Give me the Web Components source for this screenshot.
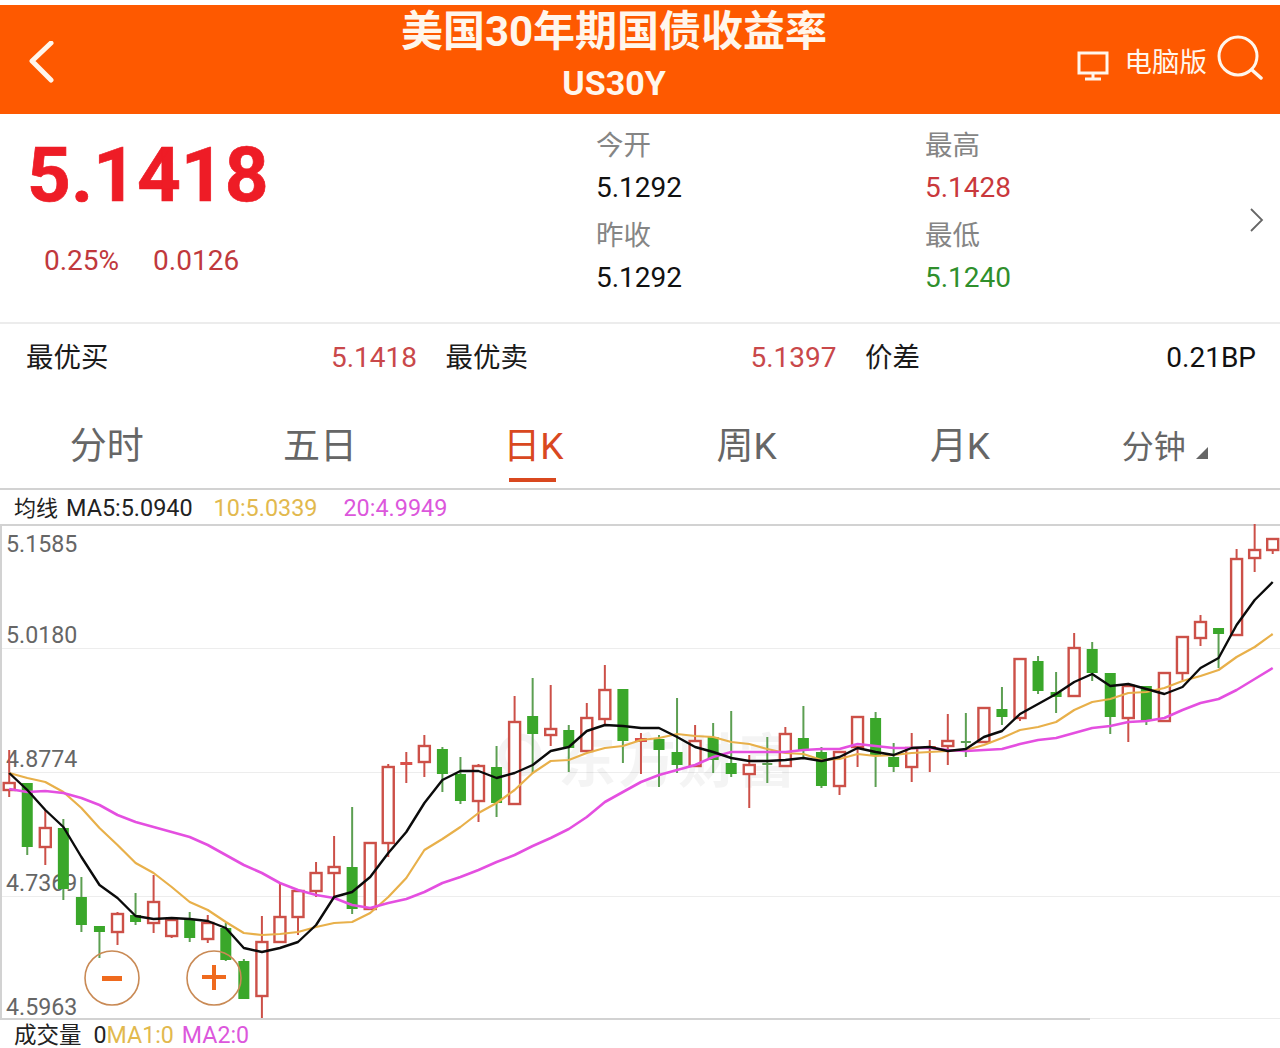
<!DOCTYPE html>
<html lang="zh">
<head>
<meta charset="utf-8">
<title>US30Y</title>
<style>
  html, body { margin: 0; padding: 0; background: #fff; }
  body { width: 1280px; height: 1048px; overflow: hidden; font-family: Roboto, "Noto Sans CJK SC", sans-serif; }
</style>
</head>
<body>
<quote-header>
  <span slot="title">美国30年期国债收益率</span>
  <span slot="code">US30Y</span>
</quote-header>
<quote-summary price="5.1418" percent="0.25%" change="0.0126">
  <quote-stat tone="#111" label="今开">5.1292</quote-stat>
  <quote-stat tone="#c9383c" label="最高">5.1428</quote-stat>
  <quote-stat tone="#111" label="昨收">5.1292</quote-stat>
  <quote-stat tone="#2f8f2c" label="最低">5.1240</quote-stat>
</quote-summary>
<quote-depth>
  <depth-cell label="最优买" tone="#c9484a">5.1418</depth-cell>
  <depth-cell label="最优卖" tone="#c9484a">5.1397</depth-cell>
  <depth-cell label="价差" tone="#111">0.21BP</depth-cell>
</quote-depth>
<period-tabs></period-tabs>
<ma-legend></ma-legend>
<kline-chart></kline-chart>
<volume-legend></volume-legend>

<script>
// quote-header
class QuoteHeader extends HTMLElement {
  constructor() {
    super();
    this.attachShadow({ mode: "open" });
    this.shadowRoot.innerHTML = `
      <style>
        :host { display: block; margin-top: 5px; height: 109px; background: #fe5900; color: #fff6ec; }
        .bar { display: grid; grid-template-columns: 400px 428px 1fr; height: 100%; }
        .back { display: flex; align-items: flex-start; padding: 36px 0 0 27px; }
        .center { display: flex; flex-direction: column; align-items: center; white-space: nowrap; font-weight: 700; }
        .title { font-size: 42px; line-height: 52px; margin-top: 1px; }
        .code { font-size: 34px; line-height: 44px; margin-top: 3px; }
        .tools { display: flex; align-items: flex-start; justify-content: flex-end; padding: 30px 17px 0 0; }
        .pc { font-size: 27.5px; line-height: 56px; margin: 0 10px 0 16px; }
        svg { display: block; fill: none; stroke: currentColor; }
      </style>
      <div class="bar">
        <div class="back">
          <svg width="28" height="42" viewBox="0 0 28 42"><polyline points="24,2 5,20 24,39" stroke-width="5" stroke-linecap="round" stroke-linejoin="round"/></svg>
        </div>
        <div class="center">
          <div class="title"><slot name="title"></slot></div>
          <div class="code"><slot name="code"></slot></div>
        </div>
        <div class="tools">
          <svg width="32" height="30" viewBox="0 0 32 30" style="margin-top:16px">
            <rect x="2" y="2" width="28" height="20" stroke-width="3"/>
            <path d="M16 22v6M8 28h16" stroke-width="3"/>
          </svg>
          <div class="pc">电脑版</div>
          <svg width="46" height="46" viewBox="0 0 46 46">
            <circle cx="21" cy="21" r="19" stroke-width="3"/>
            <path d="M35 35l9 8" stroke-width="3.5" stroke-linecap="round"/>
          </svg>
        </div>
      </div>
    `;
  }
}
customElements.define("quote-header", QuoteHeader);

// big price on the left, stats on the right
class QuoteSummary extends HTMLElement {
  constructor() {
    super();
    this.attachShadow({ mode: "open" });
    this.shadowRoot.innerHTML = `
      <style>
        :host { display: block; height: 208px; border-bottom: 2px solid #ececec; }
        .wrap { display: flex; height: 100%; }
        .left { width: 596px; padding-left: 27px; box-sizing: border-box; }
        .price { font-size: 76.5px; font-weight: 700; line-height: 90px; margin-top: 16px; color: #ee1c26; -webkit-text-stroke: .7px #ee1c26; }
        .sub { display: flex; gap: 34px; padding-left: 17px; margin-top: 23px; font-size: 28px; line-height: 36px; color: #c0393d; }
        .stats { display: grid; grid-template-columns: 329px 325px; grid-auto-rows: 90px; padding-top: 11px; }
        .more { display: flex; align-items: center; height: 212px; }
        svg { display: block; fill: none; stroke: #666; }
      </style>
      <div class="wrap">
        <div class="left">
          <div class="price"></div>
          <div class="sub"><span class="percent"></span><span class="change"></span></div>
        </div>
        <div class="stats"><slot></slot></div>
        <div class="more">
          <svg width="14" height="24" viewBox="0 0 14 24"><polyline points="1,1 12,12 1,23" stroke-width="1.8"/></svg>
        </div>
      </div>
    `;
  }
  connectedCallback() {
    this.shadowRoot.querySelector(".price").textContent = this.getAttribute("price");
    this.shadowRoot.querySelector(".percent").textContent = this.getAttribute("percent");
    this.shadowRoot.querySelector(".change").textContent = this.getAttribute("change");
  }
}
customElements.define("quote-summary", QuoteSummary);

class QuoteStat extends HTMLElement {
  constructor() {
    super();
    this.attachShadow({ mode: "open" });
    this.shadowRoot.innerHTML = `
      <style>
        :host { display: block; }
        .label { font-size: 27.5px; line-height: 42px; color: #858585; }
        .value { font-size: 28px; line-height: 42px; }
      </style>
      <div class="label"></div>
      <div class="value"><slot></slot></div>
    `;
  }
  connectedCallback() {
    this.shadowRoot.querySelector(".label").textContent = this.getAttribute("label");
    this.shadowRoot.querySelector(".value").style.color = this.getAttribute("tone");
  }
}
customElements.define("quote-stat", QuoteStat);

class QuoteDepth extends HTMLElement {
  constructor() {
    super();
    this.attachShadow({ mode: "open" });
    this.shadowRoot.innerHTML = `
      <style>
        :host { display: block; height: 86px; padding: 0 24px 0 26px; box-sizing: border-box; }
        .row { display: grid; grid-template-columns: repeat(3, 391px); column-gap: 28.5px; padding-top: 14px; }
      </style>
      <div class="row"><slot></slot></div>
    `;
  }
}
customElements.define("quote-depth", QuoteDepth);

class DepthCell extends HTMLElement {
  constructor() {
    super();
    this.attachShadow({ mode: "open" });
    this.shadowRoot.innerHTML = `
      <style>
        :host { display: flex; justify-content: space-between; font-size: 27.5px; line-height: 40px; color: #1a1a1a; }
        .value { font-size: 28px; }
      </style>
      <span class="label"></span>
      <span class="value"><slot></slot></span>
    `;
  }
  connectedCallback() {
    this.shadowRoot.querySelector(".label").textContent = this.getAttribute("label");
    this.shadowRoot.querySelector(".value").style.color = this.getAttribute("tone");
  }
}
customElements.define("depth-cell", DepthCell);

class PeriodTabs extends HTMLElement {
  constructor() {
    super();
    this.attachShadow({ mode: "open" });
    const tabs = ["分时", "五日", "日K", "周K", "月K", "分钟"];
    this.shadowRoot.innerHTML = `
      <style>
        :host { display: block; height: 78px; border-bottom: 2px solid #d2d2d2; }
        .tabs { display: grid; grid-template-columns: repeat(6, 1fr); height: 100%; }
        .tab { position: relative; display: flex; justify-content: center; font-size: 37px; line-height: 74px; color: #666; }
        .tab.on { color: #d9481f; }
        .tab.on::after { content: ""; position: absolute; left: 50%; margin-left: -24px; top: 68px; width: 47px; height: 4px; background: #d9481f; }
        .tab.more { justify-content: flex-start; padding-left: 55px; font-size: 32px; align-items: flex-start; }
        .tri { position: absolute; left: 129px; top: 37px; width: 0; height: 0; border-style: solid; border-width: 0 0 12px 12px; border-color: transparent transparent #666 transparent; }
      </style>
      <div class="tabs">
        ${tabs.map((t, i) => `<div class="tab${i === 2 ? " on" : ""}${i === 5 ? " more" : ""}">${t}${i === 5 ? '<i class="tri"></i>' : ""}</div>`).join("")}
      </div>
    `;
  }
}
customElements.define("period-tabs", PeriodTabs);

class MaLegend extends HTMLElement {
  constructor() {
    super();
    this.attachShadow({ mode: "open" });
    this.shadowRoot.innerHTML = `
      <style>
        :host { display: flex; align-items: baseline; height: 34px; padding: 3px 0 0 14px; box-sizing: border-box; font-size: 23.4px; line-height: 30px; color: #222; white-space: nowrap; }
        .a { color: #e2b94e; margin-left: 21px; }
        .b { color: #dc57dc; margin-left: 26px; }
        .cn { font-size: 22px; margin-right: 8px; }
      </style>
      <span class="cn">均线</span><span>MA5:5.0940</span>
      <span class="a">10:5.0339</span>
      <span class="b">20:4.9949</span>
    `;
  }
}
customElements.define("ma-legend", MaLegend);

// kx: [kind, high, top, bottom, low] in page pixels, r = hollow red, R = solid red, g = green
const CANDLES = [
  ["r",750,783,790,797],["g",783,783,847,855],["r",810,828,847,865],["g",819,828,889,900],
  ["g",877,897,925,932],["g",926,926,932,958],["r",912,914,932,945],["g",893,915,922,925],
  ["r",875,902,923,933],["r",917,920,936,938],["g",912,920,938,942],["r",915,923,939,943],
  ["g",923,928,960,961],["g",959,961,999,999],["r",916,942,996,1018],["r",883,917,942,942],
  ["r",890,891,917,935],["r",862,873,891,897],["r",836,867,873,897],["g",807,867,909,914],
  ["r",842,843,909,909],["r",764,767,843,857],["R",752,762,765,783],["r",735,746,762,777],
  ["g",747,749,774,792],["g",757,774,801,804],["r",764,766,801,822],["g",746,767,803,817],
  ["r",696,722,804,804],["g",678,716,734,773],["r",685,729,735,746],["g",725,730,748,772],
  ["r",703,718,751,751],["r",665,690,719,725],["g",689,689,741,763],["R",733,738,742,774],
  ["g",735,739,750,787],["g",698,752,765,773],["r",725,741,766,767],["g",723,737,760,773],
  ["g",711,763,774,777],["r",755,765,774,808],["g",737,764,765,783],["r",727,734,766,766],
  ["g",706,738,750,757],["g",747,752,786,788],["r",752,752,786,795],["r",717,717,747,767],
  ["g",712,718,755,787],["g",743,757,767,772],["r",733,748,767,782],["R",740,746,748,772],
  ["r",714,741,746,765],["g",713,742,743,757],["r",708,708,742,742],["g",687,709,717,725],
  ["r",659,659,718,721],["g",656,661,691,694],["g",672,692,697,713],["r",633,648,696,696],
  ["g",642,649,673,681],["g",673,673,717,734],["r",686,686,718,742],["g",686,686,721,725],
  ["r",673,673,721,721],["r",636,637,673,680],["r",615,622,638,646],["g",628,628,634,668],
  ["r",549,559,635,635],["r",524,550,558,572],["r",539,539,550,554]
];
const MA5 = [773,790,810,827,857,885,898,916,919,918,919,921,928,948,952,948,942,925,897,892,877,853,832,803,
  780,771,771,778,773,765,751,747,731,725,726,728,728,737,747,752,758,761,761,760,758,761,757,748,
  752,755,748,747,751,749,737,731,714,704,694,682,674,686,684,689,694,687,668,658,625,600,582];
const MA10 = [773,778,782,792,808,828,845,863,873,887,902,910,922,933,935,934,932,927,923,922,913,897,878,850,
  839,827,813,803,790,773,761,760,753,748,746,740,738,734,736,737,742,744,749,753,754,760,759,754,
  756,755,753,752,751,750,745,738,730,727,722,710,702,699,693,692,688,681,676,670,657,647,634];
const MA20 = [789,792,791,793,798,805,815,822,827,832,837,845,855,865,873,883,890,895,898,905,908,903,899,892,
  883,877,870,862,855,846,838,829,817,802,792,782,775,770,765,757,752,752,752,752,750,749,749,744,
  746,748,748,748,750,751,750,749,744,740,738,733,728,726,722,721,718,710,703,699,690,679,668];

class KlineChart extends HTMLElement {
  constructor() {
    super();
    this.attachShadow({ mode: "open" });
    this.shadowRoot.innerHTML = `
      <style>
        :host { display: block; height: 496px; }
        svg { display: block; }
        text { font-family: Roboto, "Noto Sans CJK SC", sans-serif; }
      </style>
      <svg width="1280" height="496" viewBox="0 524 1280 496">${this.draw()}</svg>
    `;
  }
  xAt(i) {
    return 9.2 + i * 18.05;
  }
  line(values, color, width) {
    const pts = values.map((y, i) => `${this.xAt(i).toFixed(1)},${y}`).join(" ");
    return `<polyline points="${pts}" fill="none" stroke="${color}" stroke-width="${width}" stroke-linejoin="round"/>`;
  }
  candle(c, i) {
    const [kind, high, top, bottom, low] = c;
    const x = this.xAt(i);
    if (kind === "g") {
      const thin = bottom - top < 3;
      return `<path d="M${x} ${high}V${low}" stroke="#5c9f52" stroke-width="2"/>` +
        (thin ? `<path d="M${x - 5} ${top}h10" stroke="#5c9f52" stroke-width="2"/>`
              : `<rect x="${x - 5.5}" y="${top}" width="11" height="${bottom - top}" fill="#3aa72a"/>`);
    }
    if (kind === "R") {
      return `<path d="M${x} ${high}V${low}" stroke="#cc5048" stroke-width="2"/>` +
        `<rect x="${x - 6}" y="${top}" width="12" height="${bottom - top}" fill="#d9504a"/>`;
    }
    return `<path d="M${x} ${high}V${low}" stroke="#cc5048" stroke-width="2"/>` +
      `<rect x="${x - 5.5}" y="${top}" width="11" height="${bottom - top}" fill="#fff" stroke="#cc5048" stroke-width="2.4"/>`;
  }
  draw() {
    const labels = [["5.1585", 552], ["5.0180", 643], ["4.8774", 767], ["4.7369", 891], ["4.5963", 1015]];
    let out = "";
    out += `<rect x="0" y="524" width="1280" height="2" fill="#d2d2d2"/>`;
    out += `<rect x="0" y="524" width="2" height="495" fill="#d2d2d2"/>`;
    out += `<rect x="0" y="1018" width="1090" height="2" fill="#d2d2d2"/>`;
    out += `<rect x="1090" y="1018" width="190" height="1" fill="#ececec"/>`;
    [648, 772, 896].forEach(y => {
      out += `<rect x="2" y="${y}" width="1278" height="1" fill="#ededed"/>`;
    });
    labels.forEach(([t, y]) => {
      out += `<text x="6" y="${y}" font-size="23.2" fill="#666">${t}</text>`;
    });
    // faint vendor mark under the candles
    out += `<circle cx="520" cy="755" r="18" fill="none" stroke="#000" stroke-opacity=".045" stroke-width="7"/>`;
    out += `<text x="558" y="782" font-size="58" font-weight="700" fill="#000" fill-opacity=".045" letter-spacing="2">东方财富</text>`;
    out += CANDLES.map((c, i) => this.candle(c, i)).join("");
    out += this.line(MA10, "#e8b04a", 2.2);
    out += this.line(MA20, "#e44fe0", 2.6);
    out += this.line(MA5, "#0b0b0b", 2.4);
    // zoom buttons
    out += `<circle cx="112" cy="978" r="27" fill="none" stroke="#c98a55" stroke-width="1.6"/>`;
    out += `<rect x="102" y="976" width="20" height="5" fill="#ef6a1e"/>`;
    out += `<circle cx="214" cy="978" r="27" fill="none" stroke="#c98a55" stroke-width="1.6"/>`;
    out += `<path d="M202 973h24v4h-24zM212 963h4v25h-4z" fill="#ef6a1e" transform="translate(0 2)"/>`;
    return out;
  }
}
customElements.define("kline-chart", KlineChart);

class VolumeLegend extends HTMLElement {
  constructor() {
    super();
    this.attachShadow({ mode: "open" });
    this.shadowRoot.innerHTML = `
      <style>
        :host { display: flex; align-items: baseline; height: 28px; padding: 4px 0 0 14px; box-sizing: border-box; font-size: 23.2px; line-height: 22px; color: #222; white-space: nowrap; }
        .cn { font-size: 22.5px; margin-right: 12px; }
        .a { color: #e2b94e; }
        .b { color: #dc57dc; margin-left: 8px; }
      </style>
      <span class="cn">成交量</span><span>0</span><span class="a">MA1:0</span><span class="b">MA2:0</span>
    `;
  }
}
customElements.define("volume-legend", VolumeLegend);
</script>
</body>
</html>
